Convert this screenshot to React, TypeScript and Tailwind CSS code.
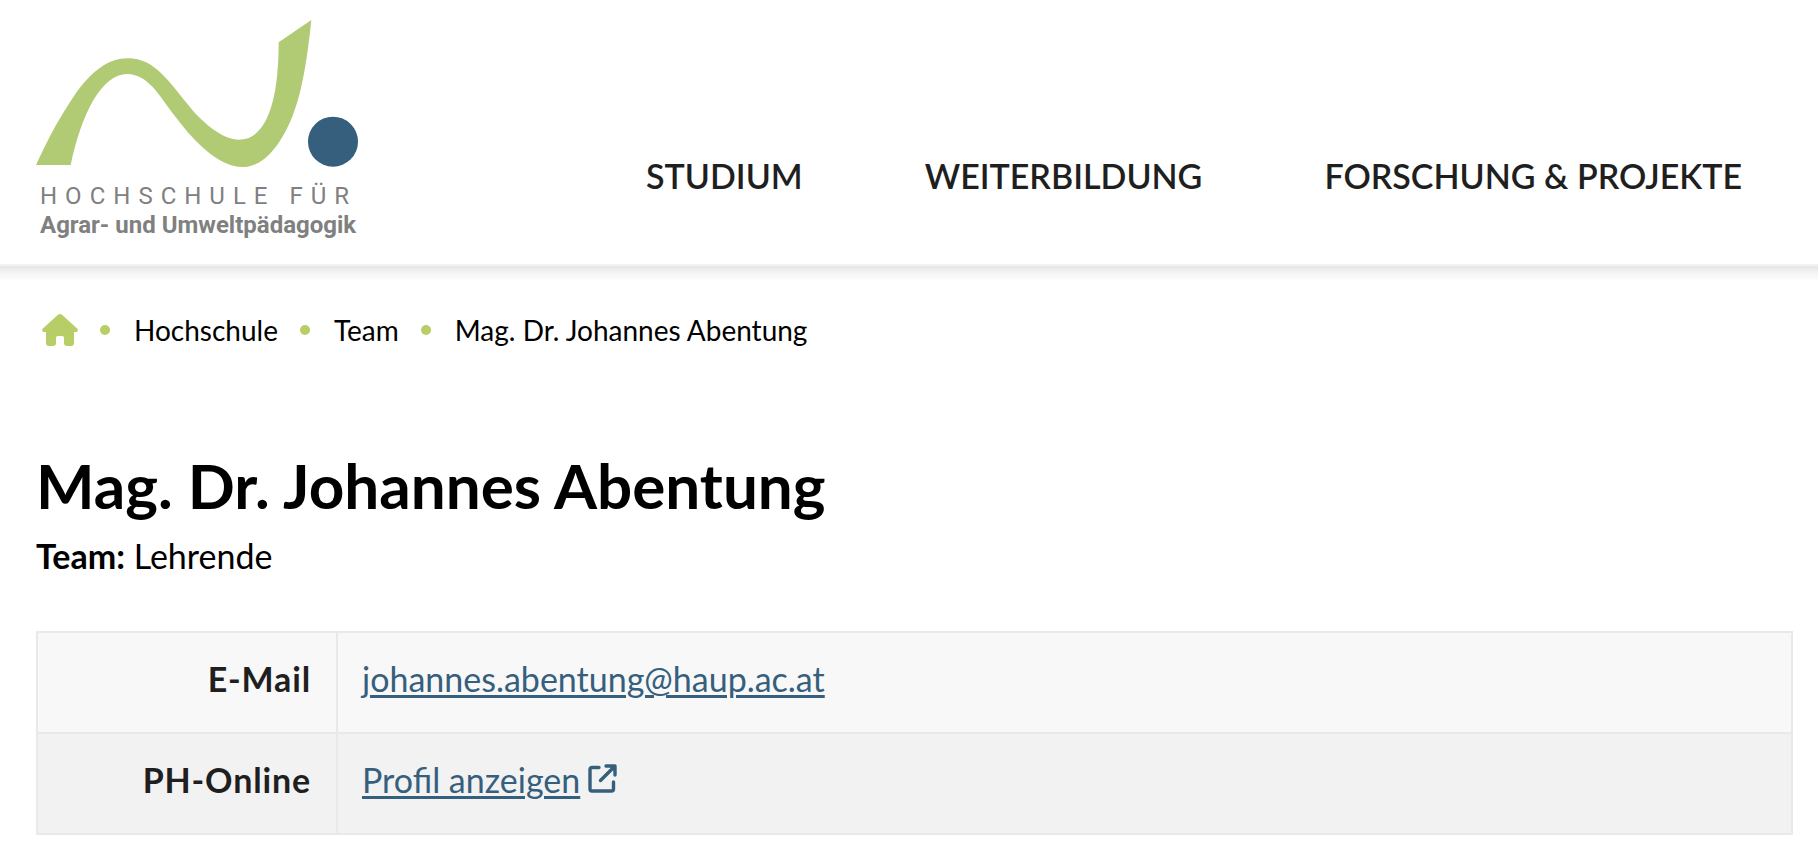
const navItems = ["STUDIUM", "WEITERBILDUNG", "FORSCHUNG & PROJEKTE"];

const crumbs = ["Hochschule", "Team", "Mag. Dr. Johannes Abentung"];

function Logo() {
  return (
    <a href="#" className="block w-[322px] font-[Roboto,sans-serif] text-[#808080]">
      <svg viewBox="48 60 966 442" className="block w-full" aria-hidden="true">
        <path
          fill="#b1cb75"
          d="M48 495C88 406 130 335 160 291C215 210 268 175 322 175C380 175 415 205 468 269C500 309 512 325 530 344C575 390 620 419 657 419C735 419 776 315 776 127L874 60C858 215 840 290 818 347C775 455 720 501 668 501C600 501 530 435 470 355C440 317 420 285 398 261C375 237 350 222 322 222C245 222 185 340 152 495Z"
        />
        <circle cx="939" cy="425" r="75" fill="#365f7e" />
      </svg>
      <span className="mt-[14px] block whitespace-nowrap px-1 text-[24px] leading-[30px] tracking-[8px]">
        HOCHSCHULE FÜR
      </span>
      <span className="block whitespace-nowrap px-1 text-[24px] leading-[28px] font-bold">
        Agrar- und Umweltpädagogik
      </span>
    </a>
  );
}

function HomeIcon() {
  return (
    <svg viewBox="66 69 108 96" className="block h-8 w-9" fill="#b7cd65" aria-hidden="true">
      <path d="M114 71Q120 67 126 71L172 113Q176 119 170 123H162V156Q162 165 153 165H141Q132 165 132 156V140Q132 135 127 135H113Q108 135 108 140V156Q108 165 99 165H87Q78 165 78 156V123H70Q64 119 68 113Z" />
    </svg>
  );
}

function ExternalIcon() {
  return (
    <svg
      viewBox="0 0 29 29"
      className="ml-2 inline-block size-[29px] align-baseline"
      fill="none"
      stroke="currentColor"
      strokeWidth="3.4"
      strokeLinecap="round"
      strokeLinejoin="round"
      aria-hidden="true"
    >
      <path d="M11 3.5H4Q2 3.5 2 5.5V25Q2 27 4 27H23.500Q25.500 27 25.500 25V18" />
      <path d="M12.500 16.500L26 3M18 2H27V11" />
      <path d="M21 2H27V8Z" fill="currentColor" stroke="none" />
    </svg>
  );
}

export default function App() {
  return (
    <div className="min-h-screen bg-white font-[Lato,sans-serif] text-black">
      <header className="flex justify-between border-b-2 border-[#f2f2f2] pt-5 pr-[76px] pb-[25px] pl-9">
        <Logo />
        <nav className="mt-[132px] flex gap-[122px] text-[34px] leading-[48px] font-semibold text-[#1f1f1f]">
          {navItems.map((item) => (
            <a key={item} href="#" className="whitespace-nowrap">
              {item}
            </a>
          ))}
        </nav>
      </header>
      <div className="h-4 bg-linear-to-b from-[#e5e5e5] via-[#f6f6f6] to-white" />

      <main className="pr-[25px] pl-9">
        <nav aria-label="Breadcrumb" className="mt-7 pl-[6px]">
          <ol className="flex items-center gap-[22px] text-[28px] leading-10">
            <li>
              <a href="#" aria-label="Startseite">
                <HomeIcon />
              </a>
            </li>
            {crumbs.map((crumb) => (
              <li key={crumb} className="flex items-center gap-6">
                <span className="size-[10px] rounded-full bg-[#b7cd65]" />
                <a href="#">{crumb}</a>
              </li>
            ))}
          </ol>
        </nav>

        <h1 className="mt-[90px] text-[62px] leading-[90px] font-bold">
          Mag. Dr. Johannes Abentung
        </h1>
        <p className="text-[34px] leading-[52px]">
          <strong>Team:</strong> Lehrende
        </p>

        <table className="mt-[49px] w-full border-collapse text-[34px] leading-[48px]">
          <tbody>
            <tr className="bg-[#f8f8f8]">
              <th className="w-[300px] border-2 border-[#e9e9e9] pt-[22px] pr-[25px] pb-[29px] text-right font-bold tracking-wide text-[#1f1f1f]">
                E-Mail
              </th>
              <td className="border-2 border-[#e9e9e9] pt-[22px] pb-[29px] pl-6 text-[#365f7e]">
                <a href="#" className="underline decoration-[3px] underline-offset-[3px]">
                  johannes.abentung@haup.ac.at
                </a>
              </td>
            </tr>
            <tr className="bg-[#f2f2f2]">
              <th className="border-2 border-[#e9e9e9] pt-[22px] pr-[25px] pb-[29px] text-right font-bold tracking-wide text-[#1f1f1f]">
                PH-Online
              </th>
              <td className="border-2 border-[#e9e9e9] pt-[22px] pb-[29px] pl-6 text-[#365f7e]">
                <a href="#">
                  <span className="underline decoration-[3px] underline-offset-[3px]">Profil anzeigen</span>
                  <ExternalIcon />
                </a>
              </td>
            </tr>
          </tbody>
        </table>
      </main>
    </div>
  );
}
